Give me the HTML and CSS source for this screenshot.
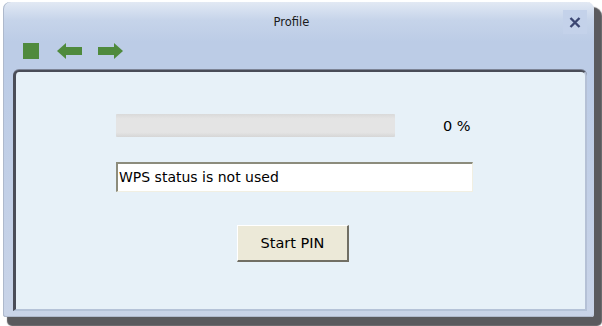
FILE: index.html
```html
<!DOCTYPE html>
<html>
<head>
<meta charset="utf-8">
<link rel="stylesheet" href="styles.css">
</head>
<body>
<div class="window">
  <div class="titlebar">
    <span class="title">Profile</span>
    <span class="close">
      <svg width="12" height="11" viewBox="0 0 12 11"><path d="M1.5 1 L10.5 10 M10.5 1 L1.5 10" stroke="#3b4672" stroke-width="2.4" fill="none"/></svg>
    </span>
  </div>
  <div class="toolbar">
    <svg class="ico" width="16" height="16" viewBox="0 0 16 16"><rect x="0" y="0" width="16" height="16" fill="#4f8a3d"/></svg>
    <svg class="ico" width="25" height="16" viewBox="0 0 25 16"><polygon points="0,8 9,0 9,4 25,4 25,12 9,12 9,16" fill="#4f8a3d"/></svg>
    <svg class="ico" width="25" height="16" viewBox="0 0 25 16"><polygon points="25,8 16,0 16,4 0,4 0,12 16,12 16,16" fill="#4f8a3d"/></svg>
  </div>
  <div class="panel">
    <div class="content">
      <div class="progress-row">
        <div class="progress"></div>
        <span class="pct">0 %</span>
      </div>
      <div class="status">WPS status is not used</div>
      <button class="btn">Start PIN</button>
    </div>
  </div>
</div>
</body>
</html>
```
FILE: styles.css
```css
html, body {
  margin: 0;
  padding: 0;
  background: #ffffff;
  width: 602px;
  height: 326px;
  overflow: hidden;
}
body {
  font-family: "DejaVu Sans", Verdana, sans-serif;
  font-size: 14px;
  color: #000;
}
.window {
  margin: 2px 0 0 3px;
  width: 591px;
  height: 315px;
  box-sizing: border-box;
  border-radius: 7px 7px 3px 3px;
  background: linear-gradient(to bottom, #e2e9f4 0px, #c6d4ea 18px, #bccce6 40px, #bccce6 68px, #c9d4e8 100%);
  box-shadow: 6px 7px 1px 2px #5a5a5e, 1px 0 0 #aeb9cc inset, 0 -1px 0 #b0bacd inset;
  padding: 0 7px 6px 10px;
  display: flex;
  flex-direction: column;
}
.titlebar {
  height: 40px;
  display: flex;
  align-items: center;
  justify-content: center;
  position: relative;
}
.title {
  font-size: 11.5px;
  color: #1a1a1a;
  margin-left: -17px;
  margin-top: 0px;
}
.close {
  position: absolute;
  right: 0px;
  top: 8px;
  width: 24px;
  height: 24px;
  display: flex;
  align-items: center;
  justify-content: center;
  background: #c4d2ea;
}
.toolbar {
  height: 28px;
  display: flex;
  align-items: flex-start;
  padding: 1px 0 0 10px;
  box-sizing: border-box;
}
.ico { display: block; margin-right: 18px; }
.ico:first-child { margin-right: 18px; }
.ico:nth-child(2) { margin-right: 16px; }
.panel {
  flex: 1;
  background: #e7f1f8;
  border-top: 2px solid #4a4d58;
  border-left: 3px solid #4a4d58;
  border-right: 2px solid #b5c1d6;
  border-bottom: 2px solid #b5c3d8;
  border-radius: 6px 6px 0 0;
  box-shadow: 0 -1px 0 #7d8496;
}
.content {
  margin: 42px 0 0 100px;
  width: 357px;
  display: flex;
  flex-direction: column;
}
.progress-row {
  display: flex;
  align-items: center;
}
.progress {
  width: 279px;
  height: 23px;
  background: linear-gradient(to bottom, #d9d9d9, #e4e4e4 20%, #e4e4e4 80%, #d6d6d6);
  border-radius: 1px;
}
.pct {
  margin-left: 48px;
  font-size: 14.5px;
}
.status {
  margin-top: 25px;
  height: 30px;
  box-sizing: border-box;
  background: #ffffff;
  border-top: 2px solid #8c8c7c;
  border-left: 2px solid #8c8c7c;
  border-right: 1px solid #f1efe2;
  border-bottom: 1px solid #f1efe2;
  padding: 4px 0 0 1px;
  font-size: 14px;
  line-height: 18px;
}
.btn {
  margin: 33px 0 0 121px;
  align-self: flex-start;
  width: 112px;
  height: 37px;
  background: #ece9d8;
  border-top: 1px solid #ffffff;
  border-left: 1px solid #ffffff;
  border-right: 2px solid #716f64;
  border-bottom: 2px solid #716f64;
  font-family: "DejaVu Sans", Verdana, sans-serif;
  font-size: 14.5px;
  color: #000;
  padding: 0;
}
```
